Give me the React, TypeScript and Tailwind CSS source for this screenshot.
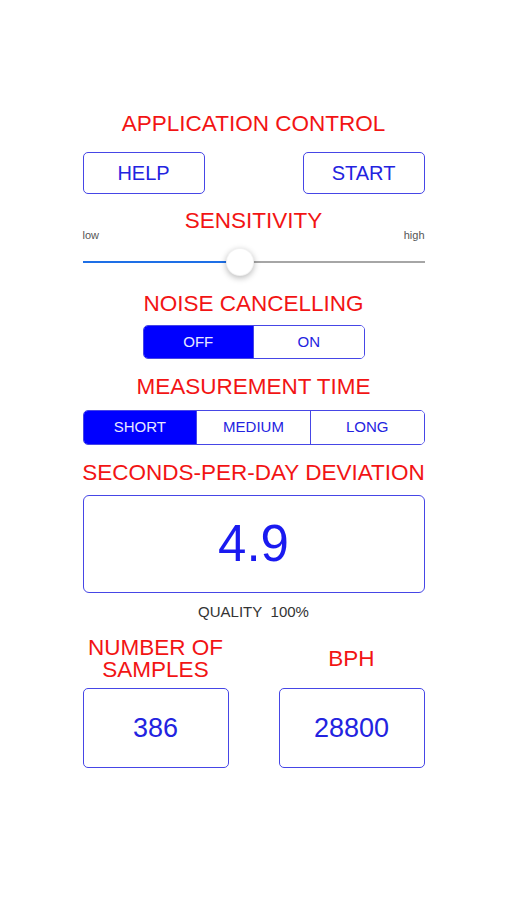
const Heading = ({ children }: { children: React.ReactNode }) => (
  <div className="-mx-4 whitespace-nowrap text-center text-[22.5px] leading-[26px] text-[#f21414]">{children}</div>
);

const OutlineButton = ({ label }: { label: string }) => (
  <button className="h-[42px] w-[122px] rounded-[5px] border-[1.5px] border-[#4646e6] text-[20px] text-[#2323e0]">
    {label}
  </button>
);

const Segmented = ({ items, active, className }: { items: string[]; active: number; className: string }) => (
  <div className={`flex overflow-hidden rounded-[5px] border-[1.5px] border-[#4646e6] ${className}`}>
    {items.map((item, i) => (
      <div
        key={item}
        className={`flex flex-1 items-center justify-center text-[15px] ${
          i === active ? 'bg-[#0000ff] text-[#e8e8ff]' : 'bg-white text-[#2323e0]'
        } ${i > 0 ? 'border-l-[1.5px] border-[#4646e6]' : ''}`}
      >
        {item}
      </div>
    ))}
  </div>
);

const ValueBox = ({ value }: { value: string }) => (
  <div className="flex h-[80px] w-[146px] items-center justify-center rounded-[5px] border-[1.5px] border-[#4646e6] text-[27px] text-[#2323e0]">
    {value}
  </div>
);

export default function App() {
  const sensitivity = 46;

  return (
    <div className="min-h-[900px] w-full bg-white font-['Liberation_Sans',Arial,sans-serif]">
      <div className="mx-auto flex w-[342px] flex-col pt-[111px]">
        <Heading>APPLICATION CONTROL</Heading>
        <div className="mt-[15px] flex justify-between">
          <OutlineButton label="HELP" />
          <OutlineButton label="START" />
        </div>

        <div className="mt-[13.5px]">
          <Heading>SENSITIVITY</Heading>
        </div>
        <div className="mt-[-4.5px] flex justify-between text-[11px] leading-[13px] text-[#555]">
          <span>low</span>
          <span>high</span>
        </div>
        <div className="relative mt-[6px] h-[28px]">
          <div className="absolute top-[13px] left-0 h-[2px] bg-[#1e6fe6]" style={{ width: `${sensitivity}%` }} />
          <div className="absolute top-[13px] right-0 h-[2px] bg-[#a6a6a6]" style={{ width: `${100 - sensitivity}%` }} />
          <div
            className="absolute top-0 h-[28px] w-[28px] -translate-x-1/2 rounded-full border border-black/5 bg-white shadow-[0_2px_6px_rgba(0,0,0,0.28)]"
            style={{ left: `${sensitivity}%` }}
          />
        </div>

        <div className="mt-[14.5px]">
          <Heading>NOISE CANCELLING</Heading>
        </div>
        <Segmented items={['OFF', 'ON']} active={0} className="mt-[8.5px] mx-auto h-[34px] w-[222px]" />

        <div className="mt-[14.5px]">
          <Heading>MEASUREMENT TIME</Heading>
        </div>
        <Segmented items={['SHORT', 'MEDIUM', 'LONG']} active={0} className="mt-[10.5px] h-[35px] w-full" />

        <div className="mt-[15px]">
          <Heading>SECONDS-PER-DAY DEVIATION</Heading>
        </div>
        <div className="mt-[9px] flex h-[98px] items-center justify-center rounded-[6px] border-[1.5px] border-[#4646e6] text-[51px] text-[#1a1af0]">
          4.9
        </div>
        <div className="mt-[10px] text-center text-[15px] leading-[18px] text-[#333]">QUALITY&nbsp;&nbsp;100%</div>

        <div className="mt-[16px] flex justify-between">
          <div className="flex w-[146px] flex-col">
            <div className="flex h-[44px] flex-col items-center justify-center whitespace-nowrap text-center text-[22.5px] leading-[22px] text-[#f21414]">
              <span>NUMBER OF</span>
              <span>SAMPLES</span>
            </div>
            <div className="mt-[7px]">
              <ValueBox value="386" />
            </div>
          </div>
          <div className="flex w-[146px] flex-col">
            <div className="flex h-[44px] items-center justify-center text-[22.5px] leading-[26px] text-[#f21414]">
              BPH
            </div>
            <div className="mt-[7px]">
              <ValueBox value="28800" />
            </div>
          </div>
        </div>
      </div>
    </div>
  );
}
